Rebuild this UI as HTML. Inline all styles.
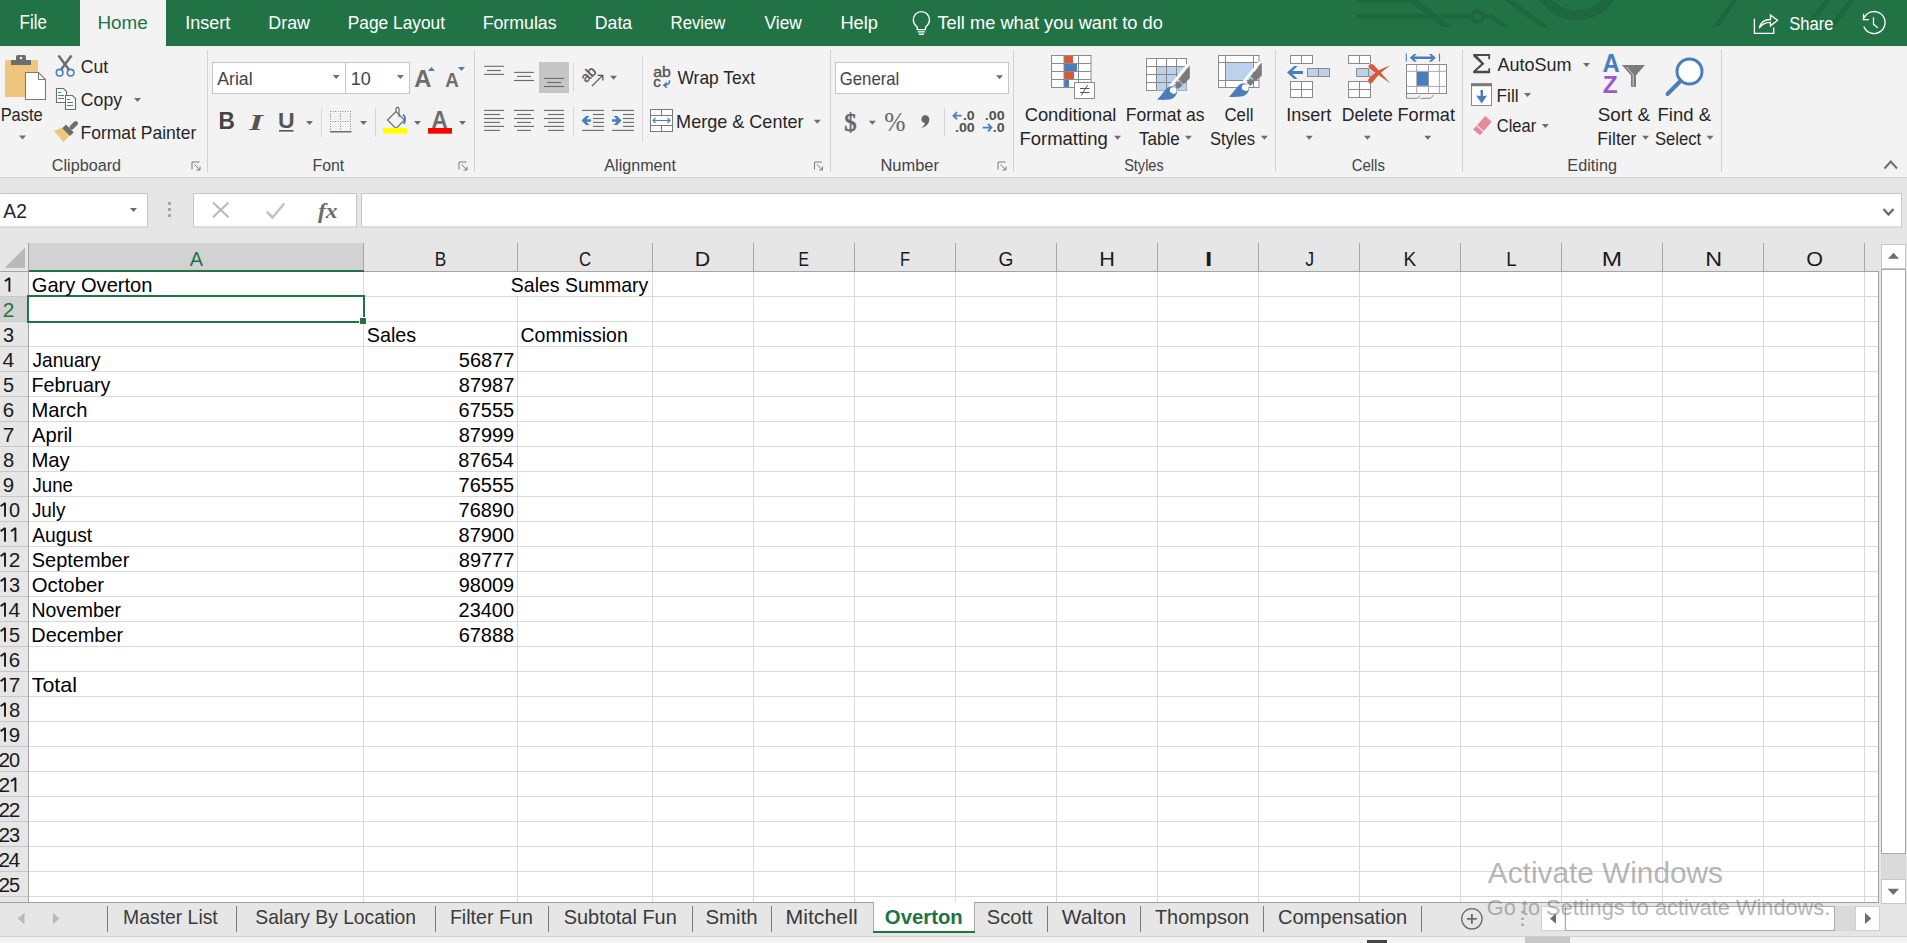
<!DOCTYPE html>
<html><head><meta charset="utf-8"><style>
html,body{margin:0;padding:0;width:1907px;height:943px;overflow:hidden;background:#e6e6e6;}
svg{display:block;font-family:"Liberation Sans",sans-serif;}
</style></head><body>
<svg width="1907" height="943" viewBox="0 0 1907 943" shape-rendering="auto">
<rect x="0" y="0" width="1907" height="46" fill="#217346"/>
<g fill="none" stroke="#1e6840" stroke-width="5"><path d="M1356 0.5H1414L1452 29"/><path d="M1356 16.5H1471"/><path d="M1484 16.5H1492L1508 29"/><path d="M1408 -3L1449 29"/><path d="M1505 -3L1547 29"/><path d="M1830 -3L1808 26"/><path d="M1854 -3L1832 26"/><path d="M1737 -3L1714 29"/></g>
<circle cx="1477.5" cy="16.5" r="5.5" fill="none" stroke="#1e6840" stroke-width="4"/>
<circle cx="1577" cy="-24.3" r="39.7" fill="none" stroke="#1e6840" stroke-width="10"/>
<rect x="1300" y="27" width="460" height="19" fill="#217346"/>
<rect x="1790" y="26" width="117" height="20" fill="#217346"/>
<rect x="80" y="0" width="86" height="47" fill="#f3f3f3"/>
<rect x="0" y="46" width="1907" height="131" fill="#f3f3f3"/>
<rect x="0" y="177" width="1907" height="1" fill="#d5d5d5"/>
<rect x="0" y="178" width="1907" height="65" fill="#e6e6e6"/>
<text x="19.61" y="29.30" font-family="Liberation Sans, sans-serif" font-size="20.35" font-weight="normal" fill="#ffffff" textLength="27.13" lengthAdjust="spacingAndGlyphs">File</text>
<text x="97.44" y="29.10" font-family="Liberation Sans, sans-serif" font-size="18.90" font-weight="normal" fill="#217346" textLength="50.36" lengthAdjust="spacingAndGlyphs">Home</text>
<text x="185.14" y="29.10" font-family="Liberation Sans, sans-serif" font-size="18.90" font-weight="normal" fill="#ffffff" textLength="45.02" lengthAdjust="spacingAndGlyphs">Insert</text>
<text x="268.33" y="29.10" font-family="Liberation Sans, sans-serif" font-size="18.90" font-weight="normal" fill="#ffffff" textLength="41.60" lengthAdjust="spacingAndGlyphs">Draw</text>
<text x="347.77" y="29.20" font-family="Liberation Sans, sans-serif" font-size="18.90" font-weight="normal" fill="#ffffff" textLength="97.27" lengthAdjust="spacingAndGlyphs">Page Layout</text>
<text x="482.64" y="29.30" font-family="Liberation Sans, sans-serif" font-size="18.90" font-weight="normal" fill="#ffffff" textLength="73.99" lengthAdjust="spacingAndGlyphs">Formulas</text>
<text x="594.85" y="29.30" font-family="Liberation Sans, sans-serif" font-size="18.90" font-weight="normal" fill="#ffffff" textLength="37.25" lengthAdjust="spacingAndGlyphs">Data</text>
<text x="670.62" y="29.30" font-family="Liberation Sans, sans-serif" font-size="18.90" font-weight="normal" fill="#ffffff" textLength="54.82" lengthAdjust="spacingAndGlyphs">Review</text>
<text x="764.51" y="29.30" font-family="Liberation Sans, sans-serif" font-size="18.90" font-weight="normal" fill="#ffffff" textLength="37.33" lengthAdjust="spacingAndGlyphs">View</text>
<text x="840.39" y="29.40" font-family="Liberation Sans, sans-serif" font-size="18.90" font-weight="normal" fill="#ffffff" textLength="37.68" lengthAdjust="spacingAndGlyphs">Help</text>
<text x="937.49" y="29.40" font-family="Liberation Sans, sans-serif" font-size="18.90" font-weight="normal" fill="#ffffff" textLength="225.45" lengthAdjust="spacingAndGlyphs">Tell me what you want to do</text>
<text x="1789.15" y="29.80" font-family="Liberation Sans, sans-serif" font-size="19.19" font-weight="normal" fill="#ffffff" textLength="44.37" lengthAdjust="spacingAndGlyphs">Share</text>
<g fill="none" stroke="#ffffff" stroke-width="1.4"><path d="M917.3 27.2C914.6 24.8 913.3 22.2 913.3 19.7A8.1 8.1 0 0 1 929.5 19.7C929.5 22.2 928.2 24.8 925.5 27.2V29.6H917.3Z"/><path d="M917.8 31.9H925M918.8 34.3H924"/></g>
<g fill="none" stroke="#ffffff" stroke-width="1.3"><path d="M1754.4 18.8V33.4H1773.7V27.5"/><path d="M1759.2 28.2C1760.5 22.5 1764.5 19.5 1770.5 19.5V15L1777.6 20.3L1770.5 25.8V22.3C1765 22.3 1761.5 24.5 1759.2 28.2Z"/></g>
<g fill="none" stroke="#ffffff" stroke-width="1.3"><path d="M1863.9 18.3A11 11 0 1 1 1863.8 26.5"/><path d="M1863.5 13.8V19.6H1869"/><path d="M1873.5 17.2V24.2L1878 28"/></g>
<rect x="207" y="50" width="1" height="122" fill="#d2d2d2"/>
<rect x="474" y="50" width="1" height="122" fill="#d2d2d2"/>
<rect x="830" y="50" width="1" height="122" fill="#d2d2d2"/>
<rect x="1013" y="50" width="1" height="122" fill="#d2d2d2"/>
<rect x="1275" y="50" width="1" height="122" fill="#d2d2d2"/>
<rect x="1462" y="50" width="1" height="122" fill="#d2d2d2"/>
<rect x="1721" y="50" width="1" height="122" fill="#d2d2d2"/>
<text x="51.79" y="170.70" font-family="Liberation Sans, sans-serif" font-size="16.13" font-weight="normal" fill="#444444" textLength="69.23" lengthAdjust="spacingAndGlyphs">Clipboard</text>
<g fill="none" stroke="#7a7a7a" stroke-width="1"><path d="M192.0 169.5V162.0H199.5"/><path d="M194.5 164.5L200.0 170.0M200.0 166.5V170.0H196.5"/></g>
<text x="312.60" y="170.70" font-family="Liberation Sans, sans-serif" font-size="15.70" font-weight="normal" fill="#444444" textLength="31.64" lengthAdjust="spacingAndGlyphs">Font</text>
<g fill="none" stroke="#7a7a7a" stroke-width="1"><path d="M459.0 169.5V162.0H466.5"/><path d="M461.5 164.5L467.0 170.0M467.0 166.5V170.0H463.5"/></g>
<text x="604.36" y="170.60" font-family="Liberation Sans, sans-serif" font-size="15.70" font-weight="normal" fill="#444444" textLength="71.55" lengthAdjust="spacingAndGlyphs">Alignment</text>
<g fill="none" stroke="#7a7a7a" stroke-width="1"><path d="M814.5 169.5V162.0H822"/><path d="M817 164.5L822.5 170.0M822.5 166.5V170.0H819"/></g>
<text x="880.44" y="171.00" font-family="Liberation Sans, sans-serif" font-size="15.70" font-weight="normal" fill="#444444" textLength="58.53" lengthAdjust="spacingAndGlyphs">Number</text>
<g fill="none" stroke="#7a7a7a" stroke-width="1"><path d="M998.0 169.5V162.0H1005.5"/><path d="M1000.5 164.5L1006.0 170.0M1006.0 166.5V170.0H1002.5"/></g>
<text x="1124.15" y="170.80" font-family="Liberation Sans, sans-serif" font-size="15.70" font-weight="normal" fill="#444444" textLength="39.57" lengthAdjust="spacingAndGlyphs">Styles</text>
<text x="1351.65" y="171.00" font-family="Liberation Sans, sans-serif" font-size="15.70" font-weight="normal" fill="#444444" textLength="33.28" lengthAdjust="spacingAndGlyphs">Cells</text>
<text x="1567.36" y="171.00" font-family="Liberation Sans, sans-serif" font-size="15.70" font-weight="normal" fill="#444444" textLength="49.55" lengthAdjust="spacingAndGlyphs">Editing</text>
<path d="M1884.5 168.5L1890.8 161.5L1897 168.5" fill="none" stroke="#6d6d6d" stroke-width="2"/>
<rect x="5" y="60" width="33" height="37" rx="1.5" fill="#eec67e"/>
<rect x="11" y="60" width="20" height="5" fill="#6d6d6d"/>
<rect x="16" y="55" width="10" height="6" rx="1.5" fill="#6d6d6d"/>
<circle cx="21" cy="58" r="1.3" fill="#f3f3f3"/>
<path d="M25.5 72.5H38.5L45.5 79.5V99.5H25.5Z" fill="#ffffff" stroke="#7a7a7a" stroke-width="1.1"/>
<path d="M38.5 72.5V79.5H45.5" fill="none" stroke="#7a7a7a" stroke-width="1.1"/>
<text x="0.64" y="120.60" font-family="Liberation Sans, sans-serif" font-size="17.88" font-weight="normal" fill="#262626" textLength="42.09" lengthAdjust="spacingAndGlyphs">Paste</text>
<path d="M19.0 135.5h7l-3.5 4z" fill="#6d6d6d"/>
<path d="M58.5 55.5L69 69.8M71.5 55.5L61 69.8" fill="none" stroke="#6d6d6d" stroke-width="2.5"/>
<g fill="none" stroke="#4a7ebb" stroke-width="1.6"><circle cx="59.6" cy="72.7" r="3.3"/><circle cx="70.6" cy="72.7" r="3.3"/></g>
<text x="80.82" y="72.60" font-family="Liberation Sans, sans-serif" font-size="18.17" font-weight="normal" fill="#262626" textLength="27.33" lengthAdjust="spacingAndGlyphs">Cut</text>
<g fill="#ffffff" stroke="#6d6d6d" stroke-width="1.1"><path d="M56.5 88.5H63.5L66.5 91.5V102.5H56.5Z"/><path d="M65.5 95.5H72.5L75.5 98.5V109.5H65.5Z"/></g>
<g stroke="#4a7ebb" stroke-width="1"><path d="M58 92.5H61M58 95.5H64M58 98.5H64M67 99.5H70M67 102.5H73M67 105.5H73"/></g>
<text x="80.82" y="105.70" font-family="Liberation Sans, sans-serif" font-size="17.88" font-weight="normal" fill="#262626" textLength="41.22" lengthAdjust="spacingAndGlyphs">Copy</text>
<path d="M134.0 98.0h7l-3.5 4z" fill="#6d6d6d"/>
<path d="M54 131L62.5 127.5L69.5 135.5L63.5 142Z" fill="#eec67e"/>
<rect x="-5.5" y="-2.6" width="11" height="5.2" fill="#6d6d6d" transform="translate(68 130.2) rotate(45)"/>
<rect x="-5" y="-2.2" width="10" height="4.4" rx="2" fill="#6d6d6d" transform="translate(73.8 125.3) rotate(-45)"/>
<text x="80.56" y="139.00" font-family="Liberation Sans, sans-serif" font-size="18.17" font-weight="normal" fill="#262626" textLength="115.72" lengthAdjust="spacingAndGlyphs">Format Painter</text>
<rect x="212.5" y="62.5" width="133" height="31" fill="#ffffff" stroke="#c6c6c6"/>
<rect x="345.5" y="62.5" width="64" height="31" fill="#ffffff" stroke="#c6c6c6"/>
<text x="217.26" y="85.00" font-family="Liberation Sans, sans-serif" font-size="18.90" font-weight="normal" fill="#444444" textLength="35.35" lengthAdjust="spacingAndGlyphs">Arial</text>
<path d="M332.7 75.0h7l-3.5 4z" fill="#6d6d6d"/>
<text x="350.65" y="85.00" font-family="Liberation Sans, sans-serif" font-size="18.90" font-weight="normal" fill="#444444" textLength="20.07" lengthAdjust="spacingAndGlyphs">10</text>
<path d="M396.9 75.0h7l-3.5 4z" fill="#6d6d6d"/>
<text x="414.21" y="87.10" font-family="Liberation Sans, sans-serif" font-size="23.98" font-weight="bold" fill="#6d6d6d" textLength="17.14" lengthAdjust="spacingAndGlyphs">A</text>
<path d="M427.8 71L431.4 67L435 71Z" fill="#4a7ebb"/>
<text x="445.33" y="87.00" font-family="Liberation Sans, sans-serif" font-size="19.62" font-weight="bold" fill="#6d6d6d" textLength="13.58" lengthAdjust="spacingAndGlyphs">A</text>
<path d="M458 67H465L461.5 71Z" fill="#4a7ebb"/>
<text x="218.47" y="129.30" font-family="Liberation Sans, sans-serif" font-size="23.69" font-weight="bold" fill="#444444" textLength="16.34" lengthAdjust="spacingAndGlyphs">B</text>
<text x="249" y="129.5" font-family="Liberation Serif, serif" font-style="italic" font-weight="bold" font-size="23" fill="#555555" textLength="14" lengthAdjust="spacingAndGlyphs">I</text>
<text x="277.92" y="128.00" font-family="Liberation Sans, sans-serif" font-size="21.80" font-weight="bold" fill="#555555" textLength="16.66" lengthAdjust="spacingAndGlyphs">U</text>
<rect x="279" y="130" width="14.5" height="1.6" fill="#555555"/>
<path d="M306.0 121.0h7l-3.5 4z" fill="#6d6d6d"/>
<rect x="321" y="108" width="1" height="29" fill="#d6d6d6"/>
<g fill="none" stroke="#8a8a8a" stroke-width="1" stroke-dasharray="1 1.5"><path d="M330 111.5H351M330 121.5H351M330.5 111V131M340.5 111V131M350.5 111V131"/></g>
<rect x="330" y="131" width="21.5" height="1.5" fill="#6d6d6d"/>
<path d="M360.0 121.0h7l-3.5 4z" fill="#6d6d6d"/>
<rect x="375" y="108" width="1" height="29" fill="#d6d6d6"/>
<g fill="none" stroke="#6d6d6d" stroke-width="1.2"><path d="M387.5 120L396 111.5L404.5 120L396 128.5Z"/><path d="M396 111.5V108.5A1.6 1.6 0 0 1 399 108.5V117"/></g>
<path d="M403 114.5C405.5 116.5 405.5 120.5 404 124" fill="none" stroke="#4a7ebb" stroke-width="1.8"/>
<rect x="383" y="128" width="24" height="5.7" fill="#ffff00"/>
<path d="M414.0 121.0h7l-3.5 4z" fill="#6d6d6d"/>
<text x="431.44" y="128.00" font-family="Liberation Sans, sans-serif" font-size="23.98" font-weight="bold" fill="#6d6d6d" textLength="16.17" lengthAdjust="spacingAndGlyphs">A</text>
<rect x="428" y="128" width="24" height="5.7" fill="#ff0000"/>
<path d="M459.0 121.0h7l-3.5 4z" fill="#6d6d6d"/>
<rect x="484.0" y="65.75" width="20.0" height="1.1" fill="#6a6a6a"/>
<rect x="487.0" y="69.95" width="14.0" height="1.1" fill="#6a6a6a"/>
<rect x="484.0" y="73.85" width="20.0" height="1.1" fill="#6a6a6a"/>
<rect x="514.0" y="71.85" width="20.0" height="1.1" fill="#6a6a6a"/>
<rect x="517.0" y="75.85" width="14.0" height="1.1" fill="#6a6a6a"/>
<rect x="514.0" y="79.95" width="20.0" height="1.1" fill="#6a6a6a"/>
<rect x="539" y="62" width="30" height="31" fill="#c6c6c6"/>
<rect x="544.0" y="77.85" width="20.0" height="1.1" fill="#6a6a6a"/>
<rect x="547.0" y="81.95" width="14.0" height="1.1" fill="#6a6a6a"/>
<rect x="544.0" y="85.95" width="20.0" height="1.1" fill="#6a6a6a"/>
<rect x="573" y="63" width="1" height="29" fill="#d6d6d6"/>
<text x="0" y="0" font-family="Liberation Sans, sans-serif" font-size="14.5" fill="#555555" stroke="#555555" stroke-width="0.35" transform="translate(586.2 83.3) rotate(-45)" textLength="15.5" lengthAdjust="spacingAndGlyphs">ab</text>
<path d="M591.9 86.1L602.6 75.4M597.6 75.3H602.8V80.5" fill="none" stroke="#555555" stroke-width="1.3"/>
<path d="M610.0 75.8h7l-3.5 4z" fill="#6d6d6d"/>
<rect x="642" y="56" width="1" height="86" fill="#d6d6d6"/>
<text x="653.23" y="76.70" font-family="Liberation Sans, sans-serif" font-size="14.68" font-weight="normal" fill="#505050" textLength="17.65" lengthAdjust="spacingAndGlyphs" stroke="#505050" stroke-width="0.3">ab</text>
<text x="653.26" y="86.90" font-family="Liberation Sans, sans-serif" font-size="14.39" font-weight="normal" fill="#505050" textLength="7.56" lengthAdjust="spacingAndGlyphs" stroke="#505050" stroke-width="0.3">c</text>
<path d="M669.6 80.2C669.8 83.6 667.8 85.2 664.4 85.2M666.8 82.6L663.9 85.2L666.8 87.7" fill="none" stroke="#4a7ebb" stroke-width="1.6"/>
<text x="677.51" y="83.70" font-family="Liberation Sans, sans-serif" font-size="17.73" font-weight="normal" fill="#262626" textLength="77.62" lengthAdjust="spacingAndGlyphs">Wrap Text</text>
<rect x="484.0" y="109.85" width="20.0" height="1.1" fill="#6a6a6a"/>
<rect x="514.0" y="109.85" width="20.0" height="1.1" fill="#6a6a6a"/>
<rect x="544.0" y="109.85" width="20.0" height="1.1" fill="#6a6a6a"/>
<rect x="484.0" y="113.95" width="16.0" height="1.1" fill="#6a6a6a"/>
<rect x="517.0" y="113.95" width="14.0" height="1.1" fill="#6a6a6a"/>
<rect x="548.0" y="113.95" width="16.0" height="1.1" fill="#6a6a6a"/>
<rect x="484.0" y="117.95" width="20.0" height="1.1" fill="#6a6a6a"/>
<rect x="514.0" y="117.95" width="20.0" height="1.1" fill="#6a6a6a"/>
<rect x="544.0" y="117.95" width="20.0" height="1.1" fill="#6a6a6a"/>
<rect x="484.0" y="121.85" width="16.0" height="1.1" fill="#6a6a6a"/>
<rect x="517.0" y="121.85" width="14.0" height="1.1" fill="#6a6a6a"/>
<rect x="548.0" y="121.85" width="16.0" height="1.1" fill="#6a6a6a"/>
<rect x="484.0" y="125.85" width="20.0" height="1.1" fill="#6a6a6a"/>
<rect x="514.0" y="125.85" width="20.0" height="1.1" fill="#6a6a6a"/>
<rect x="544.0" y="125.85" width="20.0" height="1.1" fill="#6a6a6a"/>
<rect x="484.0" y="129.85" width="16.0" height="1.1" fill="#6a6a6a"/>
<rect x="517.0" y="129.85" width="14.0" height="1.1" fill="#6a6a6a"/>
<rect x="548.0" y="129.85" width="16.0" height="1.1" fill="#6a6a6a"/>
<rect x="573" y="107" width="1" height="29" fill="#d6d6d6"/>
<rect x="582.0" y="109.85" width="22.0" height="1.1" fill="#6a6a6a"/>
<rect x="612.0" y="109.85" width="22.0" height="1.1" fill="#6a6a6a"/>
<rect x="593.0" y="113.95" width="11.0" height="1.1" fill="#6a6a6a"/>
<rect x="623.0" y="113.95" width="11.0" height="1.1" fill="#6a6a6a"/>
<rect x="593.0" y="117.95" width="11.0" height="1.1" fill="#6a6a6a"/>
<rect x="623.0" y="117.95" width="11.0" height="1.1" fill="#6a6a6a"/>
<rect x="593.0" y="121.85" width="11.0" height="1.1" fill="#6a6a6a"/>
<rect x="623.0" y="121.85" width="11.0" height="1.1" fill="#6a6a6a"/>
<rect x="593.0" y="125.85" width="11.0" height="1.1" fill="#6a6a6a"/>
<rect x="623.0" y="125.85" width="11.0" height="1.1" fill="#6a6a6a"/>
<rect x="582.0" y="129.85" width="22.0" height="1.1" fill="#6a6a6a"/>
<rect x="612.0" y="129.85" width="22.0" height="1.1" fill="#6a6a6a"/>
<path d="M581.5 120.5L586 116H589.5L586.5 119.2H591V121.8H586.5L589.5 125H586Z" fill="#4a7ebb"/>
<path d="M621.6 120.5L617.1 116H613.6L616.6 119.2H612V121.8H616.6L613.6 125H617.1Z" fill="#4a7ebb"/>
<rect x="650.5" y="109.5" width="22" height="22" fill="#ffffff" stroke="#7a7a7a" stroke-width="1"/>
<path d="M650.5 115.5H672.5M650.5 125.5H672.5M661.5 109.5V115.5M661.5 125.5V131.5" stroke="#7a7a7a" stroke-width="1"/>
<path d="M653 120.5H670M655.5 118L653 120.5L655.5 123M667.5 118L670 120.5L667.5 123" fill="none" stroke="#4a7ebb" stroke-width="1.2"/>
<text x="676.11" y="128.10" font-family="Liberation Sans, sans-serif" font-size="18.31" font-weight="normal" fill="#262626" textLength="127.38" lengthAdjust="spacingAndGlyphs">Merge &amp; Center</text>
<path d="M813.8 119.7h7l-3.5 4z" fill="#6d6d6d"/>
<rect x="835.5" y="62.5" width="173" height="31" fill="#ffffff" stroke="#c6c6c6"/>
<text x="839.76" y="84.70" font-family="Liberation Sans, sans-serif" font-size="18.31" font-weight="normal" fill="#444444" textLength="59.57" lengthAdjust="spacingAndGlyphs">General</text>
<path d="M996.0 75.2h7l-3.5 4z" fill="#6d6d6d"/>
<text x="844.28" y="131.00" font-family="Liberation Serif, sans-serif" font-size="25.44" font-weight="normal" fill="#666666" textLength="12.28" lengthAdjust="spacingAndGlyphs" stroke="#666666" stroke-width="0.7">$</text>
<path d="M868.9 120.8h7l-3.5 4z" fill="#6d6d6d"/>
<text x="884.16" y="131.20" font-family="Liberation Serif, sans-serif" font-size="26.45" font-weight="normal" fill="#666666" textLength="21.25" lengthAdjust="spacingAndGlyphs">%</text>
<path d="M924.6 115.3C928.2 115 930 117.6 929.1 121.2C928.3 124.4 925.5 127 921.3 128C923.4 126.2 924.6 124.8 925 123C922.4 122.9 921.2 121 921.4 119C921.6 116.9 922.8 115.5 924.6 115.3Z" fill="#666666"/>
<rect x="944" y="108" width="1" height="28" fill="#d6d6d6"/>
<path d="M957 112L953.5 115.7L957 119.4M953.5 115.7H961.6" fill="none" stroke="#4a7ebb" stroke-width="1.8"/>
<text x="962.95" y="119.60" font-family="Liberation Sans, sans-serif" font-size="12.35" font-weight="bold" fill="#505050" textLength="11.73" lengthAdjust="spacingAndGlyphs">.0</text>
<text x="954.94" y="131.60" font-family="Liberation Sans, sans-serif" font-size="12.35" font-weight="bold" fill="#505050" textLength="19.73" lengthAdjust="spacingAndGlyphs">.00</text>
<text x="984.74" y="119.60" font-family="Liberation Sans, sans-serif" font-size="12.35" font-weight="bold" fill="#505050" textLength="19.84" lengthAdjust="spacingAndGlyphs">.00</text>
<path d="M988 123.8L991.5 127.6L988 131.4M982.6 127.6H991.2" fill="none" stroke="#4a7ebb" stroke-width="1.8"/>
<text x="992.74" y="131.60" font-family="Liberation Sans, sans-serif" font-size="12.35" font-weight="bold" fill="#505050" textLength="11.85" lengthAdjust="spacingAndGlyphs">.0</text>
<rect x="1051.5" y="55.5" width="39.5" height="32" fill="#ffffff" stroke="#8a8a8a" stroke-width="1"/>
<rect x="1064" y="56" width="9" height="7.5" fill="#d9583b"/>
<rect x="1064" y="63.5" width="13" height="8" fill="#4a7ebb"/>
<rect x="1064" y="71.5" width="10" height="8" fill="#d9583b"/>
<rect x="1064" y="79.5" width="5" height="7.5" fill="#4a7ebb"/>
<path d="M1051.5 63.5H1091M1051.5 71.5H1091M1051.5 79.5H1091M1064 55.5V87.5M1078.5 55.5V87.5" stroke="#8a8a8a" stroke-width="1" fill="none"/>
<rect x="1074.5" y="82.5" width="20" height="16" fill="#ffffff" stroke="#8a8a8a" stroke-width="1"/>
<path d="M1080 88.5H1089.5M1080 92.5H1089.5M1087.6 85L1081.3 95.5" stroke="#555555" stroke-width="1" fill="none"/>
<text x="1024.68" y="120.60" font-family="Liberation Sans, sans-serif" font-size="18.02" font-weight="normal" fill="#262626" textLength="91.73" lengthAdjust="spacingAndGlyphs">Conditional</text>
<text x="1019.48" y="144.80" font-family="Liberation Sans, sans-serif" font-size="18.02" font-weight="normal" fill="#262626" textLength="88.32" lengthAdjust="spacingAndGlyphs">Formatting</text>
<path d="M1114.1 135.8h7l-3.5 4z" fill="#6d6d6d"/>
<rect x="1146.5" y="58.5" width="40" height="32" fill="#ffffff" stroke="#8a8a8a" stroke-width="1"/>
<rect x="1156.5" y="66.5" width="30" height="24" fill="#bcd1ea"/>
<path d="M1146.5 66.5H1186.5M1146.5 74.5H1186.5M1146.5 82.5H1186.5M1156.5 58.5V90.5M1166.5 58.5V90.5M1176.5 58.5V90.5" stroke="#8a8a8a" stroke-width="1" fill="none"/>
<g transform="translate(0 0)"><path d="M1165.7 92.1L1187.7 64.9" stroke="#ffffff" stroke-width="2.6"/><path d="M1189.8 65.5V78.3L1183.6 84.2L1178.6 79.4Z" fill="#7a7a7a"/><path d="M1174.6 85.4L1178.6 81.2L1182.7 85L1178.4 89Z" fill="#7a7a7a"/><path d="M1157 99.8C1160 96.5 1163.5 92 1166.5 88.5C1169.5 85.2 1174 85.5 1176 88.5C1178 91.5 1177 96 1172.5 98.5C1169.5 100 1165 100 1157 99.8Z" fill="#4a7ebb"/><circle cx="1173.2" cy="90.6" r="3.4" fill="#ffffff"/><path d="M1166 95C1167.5 92 1170.5 91.5 1172.5 93.5C1173.5 94.6 1173.2 96.5 1172.8 97.5L1164 99Z" fill="#4a7ebb"/></g>
<text x="1125.75" y="120.60" font-family="Liberation Sans, sans-serif" font-size="18.02" font-weight="normal" fill="#262626" textLength="78.88" lengthAdjust="spacingAndGlyphs">Format as</text>
<text x="1138.92" y="144.80" font-family="Liberation Sans, sans-serif" font-size="18.02" font-weight="normal" fill="#262626" textLength="40.82" lengthAdjust="spacingAndGlyphs">Table</text>
<path d="M1184.9 135.8h7l-3.5 4z" fill="#6d6d6d"/>
<rect x="1218.5" y="55.5" width="40.5" height="32" fill="#ffffff" stroke="#8a8a8a" stroke-width="1"/>
<rect x="1226" y="63" width="27" height="17" fill="#bcd1ea"/>
<path d="M1218.5 62.5H1259M1218.5 80.5H1259M1225.5 55.5V87.5M1253.5 55.5V87.5" stroke="#8a8a8a" stroke-width="1" fill="none"/>
<g transform="translate(72 -2.9)"><path d="M1165.7 92.1L1187.7 64.9" stroke="#ffffff" stroke-width="2.6"/><path d="M1189.8 65.5V78.3L1183.6 84.2L1178.6 79.4Z" fill="#7a7a7a"/><path d="M1174.6 85.4L1178.6 81.2L1182.7 85L1178.4 89Z" fill="#7a7a7a"/><path d="M1157 99.8C1160 96.5 1163.5 92 1166.5 88.5C1169.5 85.2 1174 85.5 1176 88.5C1178 91.5 1177 96 1172.5 98.5C1169.5 100 1165 100 1157 99.8Z" fill="#4a7ebb"/><circle cx="1173.2" cy="90.6" r="3.4" fill="#ffffff"/><path d="M1166 95C1167.5 92 1170.5 91.5 1172.5 93.5C1173.5 94.6 1173.2 96.5 1172.8 97.5L1164 99Z" fill="#4a7ebb"/></g>
<text x="1224.46" y="120.60" font-family="Liberation Sans, sans-serif" font-size="18.02" font-weight="normal" fill="#262626" textLength="28.98" lengthAdjust="spacingAndGlyphs">Cell</text>
<text x="1209.96" y="144.80" font-family="Liberation Sans, sans-serif" font-size="18.02" font-weight="normal" fill="#262626" textLength="45.03" lengthAdjust="spacingAndGlyphs">Styles</text>
<path d="M1260.9 135.8h7l-3.5 4z" fill="#6d6d6d"/>
<g fill="#ffffff" stroke="#8a8a8a" stroke-width="1"><rect x="1290.5" y="55.5" width="22" height="8"/><rect x="1290.5" y="81.5" width="22" height="16"/></g>
<path d="M1301.5 55.5V63.5M1290.5 89.5H1312.5M1301.5 81.5V97.5" stroke="#8a8a8a" stroke-width="1"/>
<rect x="1307.5" y="68.5" width="22" height="8" fill="#bcd1ea" stroke="#8a8a8a" stroke-width="1"/>
<path d="M1318.5 68.5V76.5" stroke="#8a8a8a" stroke-width="1"/>
<path d="M1287 72.5L1294.3 66H1297.6L1292.3 71H1303V74H1292.3L1297.6 79H1294.3Z" fill="#4a7ebb"/>
<text x="1286.13" y="120.60" font-family="Liberation Sans, sans-serif" font-size="18.02" font-weight="normal" fill="#262626" textLength="45.12" lengthAdjust="spacingAndGlyphs">Insert</text>
<path d="M1305.8 135.8h7l-3.5 4z" fill="#6d6d6d"/>
<g fill="#ffffff" stroke="#8a8a8a" stroke-width="1"><rect x="1348.5" y="55.5" width="22" height="8"/><rect x="1348.5" y="81.5" width="22" height="16"/></g>
<path d="M1359.5 55.5V63.5M1348.5 89.5H1370.5M1359.5 81.5V97.5" stroke="#8a8a8a" stroke-width="1"/>
<path d="M1356.5 68.5H1372.5L1376 72.5L1372.5 76.5H1356.5Z" fill="#bcd1ea" stroke="#8a8a8a" stroke-width="1"/>
<path d="M1368.5 68.5V76.5" stroke="#8a8a8a" stroke-width="1"/>
<path d="M1369 65.5L1371.5 63.5L1376 66L1391 84L1372 70.5L1369.5 68.5Z" fill="#f3f3f3" stroke="#f3f3f3" stroke-width="1.5"/>
<path d="M1368.6 66.3C1369 63.8 1371.8 63.4 1373.8 65L1390.5 83.5L1371.4 70C1369.4 68.8 1368.4 67.6 1368.6 66.3Z" fill="#d9583b"/>
<path d="M1369.2 83.2C1367.6 81.5 1367.8 79.3 1369.8 77.6C1375.8 71.8 1382.8 67.6 1390.4 65.6C1384 69.6 1378.2 74.8 1373.2 81.6C1372.1 83.1 1370.3 84.2 1369.2 83.2Z" fill="#d9583b"/>
<text x="1341.74" y="120.60" font-family="Liberation Sans, sans-serif" font-size="18.02" font-weight="normal" fill="#262626" textLength="51.02" lengthAdjust="spacingAndGlyphs">Delete</text>
<path d="M1363.9 135.8h7l-3.5 4z" fill="#6d6d6d"/>
<path d="M1406.3 53.5V61.5M1439.5 53.5V61.5" stroke="#4a7ebb" stroke-width="1.1"/>
<path d="M1409.8 57.8L1414.2 53.9H1416.8L1414.2 56.5H1431.5L1428.9 53.9H1431.5L1435.9 57.8L1431.5 61.7H1428.9L1431.5 59.1H1414.2L1416.8 61.7H1414.2Z" fill="#4a7ebb"/>
<rect x="1406.5" y="64.5" width="40" height="29" fill="#ffffff" stroke="#8a8a8a" stroke-width="1"/>
<path d="M1406.5 71.3H1446.5M1406.5 86.4H1446.5M1416.7 64.5V93.5M1428.5 64.5V93.5M1439.4 64.5V93.5" stroke="#a6a6a6" stroke-width="1" fill="none"/>
<rect x="1417" y="71.8" width="11.2" height="14" fill="#4a7ebb"/>
<path d="M1406.5 93.5V98.3H1417.5L1420 95.5M1420.6 98.3H1430.5L1433.7 95" fill="none" stroke="#8a8a8a" stroke-width="1"/>
<text x="1397.50" y="120.60" font-family="Liberation Sans, sans-serif" font-size="18.02" font-weight="normal" fill="#262626" textLength="57.42" lengthAdjust="spacingAndGlyphs">Format</text>
<path d="M1424.3 135.8h7l-3.5 4z" fill="#6d6d6d"/>
<path d="M1473.2 53.9H1490.1V59.2H1488.3V56H1477.2L1484.4 63.8L1476.6 70.8H1488.3V68.3H1490.1V73.2H1473.2V71L1481.2 63.8L1473.2 56.2Z" fill="#4a4a4a"/>
<text x="1497.56" y="71.30" font-family="Liberation Sans, sans-serif" font-size="18.31" font-weight="normal" fill="#262626" textLength="74.03" lengthAdjust="spacingAndGlyphs">AutoSum</text>
<path d="M1583.0 63.0h7l-3.5 4z" fill="#6d6d6d"/>
<rect x="1471.5" y="84.5" width="20" height="21" fill="#ffffff" stroke="#8a8a8a" stroke-width="1"/>
<rect x="1471" y="83.2" width="21" height="3" fill="#7a7a7a"/>
<path d="M1480.5 90H1483V96L1487 95.4L1481.7 103.6L1476.1 95.4L1480.5 96Z" fill="#4a7ebb"/>
<text x="1496.57" y="101.70" font-family="Liberation Sans, sans-serif" font-size="18.60" font-weight="normal" fill="#262626" textLength="22.09" lengthAdjust="spacingAndGlyphs">Fill</text>
<path d="M1524.0 93.0h7l-3.5 4z" fill="#6d6d6d"/>
<path d="M1485.3 116L1491.8 121.7L1480 135.2L1473 129.4Z" fill="#e8899b"/>
<path d="M1476.5 125.4L1483.4 131.2" stroke="#f3f3f3" stroke-width="1.2"/>
<text x="1496.77" y="132.40" font-family="Liberation Sans, sans-serif" font-size="17.88" font-weight="normal" fill="#262626" textLength="39.47" lengthAdjust="spacingAndGlyphs">Clear</text>
<path d="M1541.9 124.0h7l-3.5 4z" fill="#6d6d6d"/>
<text x="1602.40" y="72.30" font-family="Liberation Sans, sans-serif" font-size="25.44" font-weight="bold" fill="#4a7ebb" textLength="17.25" lengthAdjust="spacingAndGlyphs">A</text>
<text x="1602.77" y="92.90" font-family="Liberation Sans, sans-serif" font-size="24.71" font-weight="bold" fill="#9b59c6" textLength="14.93" lengthAdjust="spacingAndGlyphs">Z</text>
<path d="M1621.9 65H1645L1636 75.2V86.7H1631V75.2Z" fill="#7a7a7a"/>
<path d="M1626.5 66.8L1633.2 74.8V86" fill="none" stroke="#d0d0d0" stroke-width="1"/>
<text x="1597.65" y="120.60" font-family="Liberation Sans, sans-serif" font-size="18.02" font-weight="normal" fill="#262626" textLength="52.31" lengthAdjust="spacingAndGlyphs">Sort &amp;</text>
<text x="1597.35" y="144.80" font-family="Liberation Sans, sans-serif" font-size="18.02" font-weight="normal" fill="#262626" textLength="39.11" lengthAdjust="spacingAndGlyphs">Filter</text>
<path d="M1642.0 135.8h7l-3.5 4z" fill="#6d6d6d"/>
<circle cx="1689.5" cy="71.5" r="12.5" fill="#ffffff" stroke="#4a7ebb" stroke-width="3"/>
<path d="M1680.5 81L1667.5 94" stroke="#4a7ebb" stroke-width="4" stroke-linecap="round"/>
<text x="1657.47" y="120.60" font-family="Liberation Sans, sans-serif" font-size="18.02" font-weight="normal" fill="#262626" textLength="53.61" lengthAdjust="spacingAndGlyphs">Find &amp;</text>
<text x="1654.95" y="144.80" font-family="Liberation Sans, sans-serif" font-size="18.02" font-weight="normal" fill="#262626" textLength="46.16" lengthAdjust="spacingAndGlyphs">Select</text>
<path d="M1706.5 135.8h7l-3.5 4z" fill="#6d6d6d"/>
<rect x="-2" y="193.5" width="149.5" height="33.5" fill="#ffffff" stroke="#c6c6c6" stroke-width="1"/>
<text x="3.35" y="217.90" font-family="Liberation Sans, sans-serif" font-size="20.35" font-weight="normal" fill="#262626" textLength="23.52" lengthAdjust="spacingAndGlyphs">A2</text>
<path d="M130.0 208.0h7l-3.5 4z" fill="#6d6d6d"/>
<rect x="168" y="202" width="3" height="3" fill="#a6a6a6"/>
<rect x="168" y="208" width="3" height="3" fill="#a6a6a6"/>
<rect x="168" y="214" width="3" height="3" fill="#a6a6a6"/>
<rect x="193.5" y="193.5" width="163" height="33.5" fill="#ffffff" stroke="#c6c6c6" stroke-width="1"/>
<path d="M213 202.5L228.5 217.3M228.5 202.5L213 217.3" stroke="#b8b8b8" stroke-width="2" fill="none"/>
<path d="M266.8 211.5L272.5 217.5L284.3 203.5" stroke="#c4c4c4" stroke-width="2.6" fill="none"/>
<text x="318" y="217.5" font-family="Liberation Serif, serif" font-style="italic" font-weight="bold" font-size="21" fill="#6a6a6a" textLength="19.5" lengthAdjust="spacingAndGlyphs">fx</text>
<rect x="361.5" y="193.5" width="1540" height="33.5" fill="#ffffff" stroke="#c6c6c6" stroke-width="1"/>
<path d="M1883.5 209L1888.5 214.5L1893.5 209" stroke="#6d6d6d" stroke-width="2.4" fill="none"/>
<rect x="29" y="272" width="1849" height="630" fill="#ffffff"/>
<rect x="0" y="243" width="1878" height="28" fill="#e6e6e6"/>
<rect x="29" y="243" width="334" height="28" fill="#d2d2d2"/>
<rect x="0" y="272" width="28" height="630" fill="#e6e6e6"/>
<rect x="0" y="297" width="28" height="24" fill="#d2d2d2"/>
<path d="M4.5 268H25V247.5Z" fill="#b9b9b9"/>
<rect x="29" y="296" width="1849" height="1" fill="#d9d9d9"/>
<rect x="0" y="296" width="28" height="1" fill="#c8c8c8"/>
<rect x="29" y="321" width="1849" height="1" fill="#d9d9d9"/>
<rect x="0" y="321" width="28" height="1" fill="#c8c8c8"/>
<rect x="29" y="346" width="1849" height="1" fill="#d9d9d9"/>
<rect x="0" y="346" width="28" height="1" fill="#c8c8c8"/>
<rect x="29" y="371" width="1849" height="1" fill="#d9d9d9"/>
<rect x="0" y="371" width="28" height="1" fill="#c8c8c8"/>
<rect x="29" y="396" width="1849" height="1" fill="#d9d9d9"/>
<rect x="0" y="396" width="28" height="1" fill="#c8c8c8"/>
<rect x="29" y="421" width="1849" height="1" fill="#d9d9d9"/>
<rect x="0" y="421" width="28" height="1" fill="#c8c8c8"/>
<rect x="29" y="446" width="1849" height="1" fill="#d9d9d9"/>
<rect x="0" y="446" width="28" height="1" fill="#c8c8c8"/>
<rect x="29" y="471" width="1849" height="1" fill="#d9d9d9"/>
<rect x="0" y="471" width="28" height="1" fill="#c8c8c8"/>
<rect x="29" y="496" width="1849" height="1" fill="#d9d9d9"/>
<rect x="0" y="496" width="28" height="1" fill="#c8c8c8"/>
<rect x="29" y="521" width="1849" height="1" fill="#d9d9d9"/>
<rect x="0" y="521" width="28" height="1" fill="#c8c8c8"/>
<rect x="29" y="546" width="1849" height="1" fill="#d9d9d9"/>
<rect x="0" y="546" width="28" height="1" fill="#c8c8c8"/>
<rect x="29" y="571" width="1849" height="1" fill="#d9d9d9"/>
<rect x="0" y="571" width="28" height="1" fill="#c8c8c8"/>
<rect x="29" y="596" width="1849" height="1" fill="#d9d9d9"/>
<rect x="0" y="596" width="28" height="1" fill="#c8c8c8"/>
<rect x="29" y="621" width="1849" height="1" fill="#d9d9d9"/>
<rect x="0" y="621" width="28" height="1" fill="#c8c8c8"/>
<rect x="29" y="646" width="1849" height="1" fill="#d9d9d9"/>
<rect x="0" y="646" width="28" height="1" fill="#c8c8c8"/>
<rect x="29" y="671" width="1849" height="1" fill="#d9d9d9"/>
<rect x="0" y="671" width="28" height="1" fill="#c8c8c8"/>
<rect x="29" y="696" width="1849" height="1" fill="#d9d9d9"/>
<rect x="0" y="696" width="28" height="1" fill="#c8c8c8"/>
<rect x="29" y="721" width="1849" height="1" fill="#d9d9d9"/>
<rect x="0" y="721" width="28" height="1" fill="#c8c8c8"/>
<rect x="29" y="746" width="1849" height="1" fill="#d9d9d9"/>
<rect x="0" y="746" width="28" height="1" fill="#c8c8c8"/>
<rect x="29" y="771" width="1849" height="1" fill="#d9d9d9"/>
<rect x="0" y="771" width="28" height="1" fill="#c8c8c8"/>
<rect x="29" y="796" width="1849" height="1" fill="#d9d9d9"/>
<rect x="0" y="796" width="28" height="1" fill="#c8c8c8"/>
<rect x="29" y="821" width="1849" height="1" fill="#d9d9d9"/>
<rect x="0" y="821" width="28" height="1" fill="#c8c8c8"/>
<rect x="29" y="846" width="1849" height="1" fill="#d9d9d9"/>
<rect x="0" y="846" width="28" height="1" fill="#c8c8c8"/>
<rect x="29" y="871" width="1849" height="1" fill="#d9d9d9"/>
<rect x="0" y="871" width="28" height="1" fill="#c8c8c8"/>
<rect x="29" y="896" width="1849" height="1" fill="#d9d9d9"/>
<rect x="0" y="896" width="28" height="1" fill="#c8c8c8"/>
<rect x="363" y="272" width="1" height="630" fill="#d9d9d9"/>
<rect x="363" y="243" width="1" height="28" fill="#a8a8a8"/>
<rect x="517" y="296" width="1" height="606" fill="#d9d9d9"/>
<rect x="517" y="243" width="1" height="28" fill="#a8a8a8"/>
<rect x="652" y="272" width="1" height="630" fill="#d9d9d9"/>
<rect x="652" y="243" width="1" height="28" fill="#a8a8a8"/>
<rect x="753" y="272" width="1" height="630" fill="#d9d9d9"/>
<rect x="753" y="243" width="1" height="28" fill="#a8a8a8"/>
<rect x="854" y="272" width="1" height="630" fill="#d9d9d9"/>
<rect x="854" y="243" width="1" height="28" fill="#a8a8a8"/>
<rect x="955" y="272" width="1" height="630" fill="#d9d9d9"/>
<rect x="955" y="243" width="1" height="28" fill="#a8a8a8"/>
<rect x="1056" y="272" width="1" height="630" fill="#d9d9d9"/>
<rect x="1056" y="243" width="1" height="28" fill="#a8a8a8"/>
<rect x="1157" y="272" width="1" height="630" fill="#d9d9d9"/>
<rect x="1157" y="243" width="1" height="28" fill="#a8a8a8"/>
<rect x="1258" y="272" width="1" height="630" fill="#d9d9d9"/>
<rect x="1258" y="243" width="1" height="28" fill="#a8a8a8"/>
<rect x="1359" y="272" width="1" height="630" fill="#d9d9d9"/>
<rect x="1359" y="243" width="1" height="28" fill="#a8a8a8"/>
<rect x="1460" y="272" width="1" height="630" fill="#d9d9d9"/>
<rect x="1460" y="243" width="1" height="28" fill="#a8a8a8"/>
<rect x="1561" y="272" width="1" height="630" fill="#d9d9d9"/>
<rect x="1561" y="243" width="1" height="28" fill="#a8a8a8"/>
<rect x="1662" y="272" width="1" height="630" fill="#d9d9d9"/>
<rect x="1662" y="243" width="1" height="28" fill="#a8a8a8"/>
<rect x="1763" y="272" width="1" height="630" fill="#d9d9d9"/>
<rect x="1763" y="243" width="1" height="28" fill="#a8a8a8"/>
<rect x="1864" y="272" width="1" height="630" fill="#d9d9d9"/>
<rect x="1864" y="243" width="1" height="28" fill="#a8a8a8"/>
<rect x="0" y="271" width="1878" height="1" fill="#a4a4a4"/>
<rect x="28" y="243" width="1" height="659" fill="#a4a4a4"/>
<rect x="1878" y="271" width="1" height="632" fill="#9e9e9e"/>
<rect x="0" y="902" width="1879" height="1" fill="#9e9e9e"/>
<rect x="29" y="270" width="335" height="2" fill="#217346"/>
<rect x="27" y="295" width="338" height="2" fill="#217346"/>
<rect x="27" y="321" width="332" height="2" fill="#217346"/>
<rect x="27" y="295" width="2" height="28" fill="#217346"/>
<rect x="363" y="295" width="2" height="22" fill="#217346"/>
<rect x="359" y="317" width="8" height="8" fill="#ffffff"/>
<rect x="360" y="318" width="6" height="6" fill="#217346"/>
<text x="189.85" y="266.00" font-family="Liberation Sans, sans-serif" font-size="20.64" font-weight="normal" fill="#217346" textLength="13.29" lengthAdjust="spacingAndGlyphs">A</text>
<text x="434.87" y="266.00" font-family="Liberation Sans, sans-serif" font-size="20.64" font-weight="normal" fill="#1a1a1a" textLength="11.52" lengthAdjust="spacingAndGlyphs">B</text>
<text x="578.96" y="266.00" font-family="Liberation Sans, sans-serif" font-size="20.64" font-weight="normal" fill="#1a1a1a" textLength="12.17" lengthAdjust="spacingAndGlyphs">C</text>
<text x="694.73" y="266.00" font-family="Liberation Sans, sans-serif" font-size="20.64" font-weight="normal" fill="#1a1a1a" textLength="15.48" lengthAdjust="spacingAndGlyphs">D</text>
<text x="798.61" y="266.00" font-family="Liberation Sans, sans-serif" font-size="20.64" font-weight="normal" fill="#1a1a1a" textLength="10.45" lengthAdjust="spacingAndGlyphs">E</text>
<text x="900.03" y="266.00" font-family="Liberation Sans, sans-serif" font-size="20.64" font-weight="normal" fill="#1a1a1a" textLength="10.15" lengthAdjust="spacingAndGlyphs">F</text>
<text x="998.54" y="266.00" font-family="Liberation Sans, sans-serif" font-size="20.64" font-weight="normal" fill="#1a1a1a" textLength="14.90" lengthAdjust="spacingAndGlyphs">G</text>
<text x="1099.21" y="266.00" font-family="Liberation Sans, sans-serif" font-size="20.64" font-weight="normal" fill="#1a1a1a" textLength="15.67" lengthAdjust="spacingAndGlyphs">H</text>
<text x="1203.30" y="266.00" font-family="Liberation Sans, sans-serif" font-size="20.64" font-weight="normal" fill="#1a1a1a" textLength="10.81" lengthAdjust="spacingAndGlyphs">I</text>
<text x="1305.23" y="266.00" font-family="Liberation Sans, sans-serif" font-size="20.64" font-weight="normal" fill="#1a1a1a" textLength="8.90" lengthAdjust="spacingAndGlyphs">J</text>
<text x="1403.53" y="266.00" font-family="Liberation Sans, sans-serif" font-size="20.64" font-weight="normal" fill="#1a1a1a" textLength="12.70" lengthAdjust="spacingAndGlyphs">K</text>
<text x="1506.36" y="266.00" font-family="Liberation Sans, sans-serif" font-size="20.64" font-weight="normal" fill="#1a1a1a" textLength="10.37" lengthAdjust="spacingAndGlyphs">L</text>
<text x="1601.79" y="266.00" font-family="Liberation Sans, sans-serif" font-size="20.64" font-weight="normal" fill="#1a1a1a" textLength="20.34" lengthAdjust="spacingAndGlyphs">M</text>
<text x="1705.28" y="266.00" font-family="Liberation Sans, sans-serif" font-size="20.64" font-weight="normal" fill="#1a1a1a" textLength="16.84" lengthAdjust="spacingAndGlyphs">N</text>
<text x="1806.18" y="266.00" font-family="Liberation Sans, sans-serif" font-size="20.64" font-weight="normal" fill="#1a1a1a" textLength="16.75" lengthAdjust="spacingAndGlyphs">O</text>
<clipPath id="rh"><rect x="0" y="272" width="28" height="630"/></clipPath><g clip-path="url(#rh)">
<path d="M5.00 281.20L9.40 278.00V291.80" fill="none" stroke="#1a1a1a" stroke-width="1.9" stroke-linejoin="bevel"/>
<text x="2.76" y="316.80" font-family="Liberation Sans, sans-serif" font-size="20.35" font-weight="normal" fill="#217346" textLength="11.61" lengthAdjust="spacingAndGlyphs">2</text>
<text x="3.05" y="341.80" font-family="Liberation Sans, sans-serif" font-size="20.35" font-weight="normal" fill="#1a1a1a" textLength="11.12" lengthAdjust="spacingAndGlyphs">3</text>
<text x="2.52" y="366.80" font-family="Liberation Sans, sans-serif" font-size="20.35" font-weight="normal" fill="#1a1a1a" textLength="11.78" lengthAdjust="spacingAndGlyphs">4</text>
<text x="3.00" y="391.80" font-family="Liberation Sans, sans-serif" font-size="20.35" font-weight="normal" fill="#1a1a1a" textLength="11.12" lengthAdjust="spacingAndGlyphs">5</text>
<text x="2.77" y="416.80" font-family="Liberation Sans, sans-serif" font-size="20.35" font-weight="normal" fill="#1a1a1a" textLength="11.42" lengthAdjust="spacingAndGlyphs">6</text>
<text x="2.76" y="441.80" font-family="Liberation Sans, sans-serif" font-size="20.35" font-weight="normal" fill="#1a1a1a" textLength="11.61" lengthAdjust="spacingAndGlyphs">7</text>
<text x="2.94" y="466.80" font-family="Liberation Sans, sans-serif" font-size="20.35" font-weight="normal" fill="#1a1a1a" textLength="11.24" lengthAdjust="spacingAndGlyphs">8</text>
<text x="2.82" y="491.80" font-family="Liberation Sans, sans-serif" font-size="20.35" font-weight="normal" fill="#1a1a1a" textLength="11.42" lengthAdjust="spacingAndGlyphs">9</text>
<path d="M0.60 506.20L5.00 503.00V516.80" fill="none" stroke="#1a1a1a" stroke-width="1.9" stroke-linejoin="bevel"/>
<text x="9.00" y="516.80" font-family="Liberation Sans, sans-serif" font-size="20.35" font-weight="normal" fill="#1a1a1a" textLength="11.07" lengthAdjust="spacingAndGlyphs">0</text>
<path d="M0.60 531.20L5.00 528.00V541.80" fill="none" stroke="#1a1a1a" stroke-width="1.9" stroke-linejoin="bevel"/>
<path d="M11.00 531.20L15.40 528.00V541.80" fill="none" stroke="#1a1a1a" stroke-width="1.9" stroke-linejoin="bevel"/>
<path d="M0.60 556.20L5.00 553.00V566.80" fill="none" stroke="#1a1a1a" stroke-width="1.9" stroke-linejoin="bevel"/>
<text x="8.76" y="566.80" font-family="Liberation Sans, sans-serif" font-size="20.35" font-weight="normal" fill="#1a1a1a" textLength="11.61" lengthAdjust="spacingAndGlyphs">2</text>
<path d="M0.60 581.20L5.00 578.00V591.80" fill="none" stroke="#1a1a1a" stroke-width="1.9" stroke-linejoin="bevel"/>
<text x="9.05" y="591.80" font-family="Liberation Sans, sans-serif" font-size="20.35" font-weight="normal" fill="#1a1a1a" textLength="11.12" lengthAdjust="spacingAndGlyphs">3</text>
<path d="M0.60 606.20L5.00 603.00V616.80" fill="none" stroke="#1a1a1a" stroke-width="1.9" stroke-linejoin="bevel"/>
<text x="8.52" y="616.80" font-family="Liberation Sans, sans-serif" font-size="20.35" font-weight="normal" fill="#1a1a1a" textLength="11.78" lengthAdjust="spacingAndGlyphs">4</text>
<path d="M0.60 631.20L5.00 628.00V641.80" fill="none" stroke="#1a1a1a" stroke-width="1.9" stroke-linejoin="bevel"/>
<text x="9.00" y="641.80" font-family="Liberation Sans, sans-serif" font-size="20.35" font-weight="normal" fill="#1a1a1a" textLength="11.12" lengthAdjust="spacingAndGlyphs">5</text>
<path d="M0.60 656.20L5.00 653.00V666.80" fill="none" stroke="#1a1a1a" stroke-width="1.9" stroke-linejoin="bevel"/>
<text x="8.77" y="666.80" font-family="Liberation Sans, sans-serif" font-size="20.35" font-weight="normal" fill="#1a1a1a" textLength="11.42" lengthAdjust="spacingAndGlyphs">6</text>
<path d="M0.60 681.20L5.00 678.00V691.80" fill="none" stroke="#1a1a1a" stroke-width="1.9" stroke-linejoin="bevel"/>
<text x="8.76" y="691.80" font-family="Liberation Sans, sans-serif" font-size="20.35" font-weight="normal" fill="#1a1a1a" textLength="11.61" lengthAdjust="spacingAndGlyphs">7</text>
<path d="M0.60 706.20L5.00 703.00V716.80" fill="none" stroke="#1a1a1a" stroke-width="1.9" stroke-linejoin="bevel"/>
<text x="8.94" y="716.80" font-family="Liberation Sans, sans-serif" font-size="20.35" font-weight="normal" fill="#1a1a1a" textLength="11.24" lengthAdjust="spacingAndGlyphs">8</text>
<path d="M0.60 731.20L5.00 728.00V741.80" fill="none" stroke="#1a1a1a" stroke-width="1.9" stroke-linejoin="bevel"/>
<text x="8.82" y="741.80" font-family="Liberation Sans, sans-serif" font-size="20.35" font-weight="normal" fill="#1a1a1a" textLength="11.42" lengthAdjust="spacingAndGlyphs">9</text>
<text x="-1.64" y="766.80" font-family="Liberation Sans, sans-serif" font-size="20.35" font-weight="normal" fill="#1a1a1a" textLength="11.61" lengthAdjust="spacingAndGlyphs">2</text>
<text x="9.00" y="766.80" font-family="Liberation Sans, sans-serif" font-size="20.35" font-weight="normal" fill="#1a1a1a" textLength="11.07" lengthAdjust="spacingAndGlyphs">0</text>
<text x="-1.64" y="791.80" font-family="Liberation Sans, sans-serif" font-size="20.35" font-weight="normal" fill="#1a1a1a" textLength="11.61" lengthAdjust="spacingAndGlyphs">2</text>
<path d="M11.00 781.20L15.40 778.00V791.80" fill="none" stroke="#1a1a1a" stroke-width="1.9" stroke-linejoin="bevel"/>
<text x="-1.64" y="816.80" font-family="Liberation Sans, sans-serif" font-size="20.35" font-weight="normal" fill="#1a1a1a" textLength="11.61" lengthAdjust="spacingAndGlyphs">2</text>
<text x="8.76" y="816.80" font-family="Liberation Sans, sans-serif" font-size="20.35" font-weight="normal" fill="#1a1a1a" textLength="11.61" lengthAdjust="spacingAndGlyphs">2</text>
<text x="-1.64" y="841.80" font-family="Liberation Sans, sans-serif" font-size="20.35" font-weight="normal" fill="#1a1a1a" textLength="11.61" lengthAdjust="spacingAndGlyphs">2</text>
<text x="9.05" y="841.80" font-family="Liberation Sans, sans-serif" font-size="20.35" font-weight="normal" fill="#1a1a1a" textLength="11.12" lengthAdjust="spacingAndGlyphs">3</text>
<text x="-1.64" y="866.80" font-family="Liberation Sans, sans-serif" font-size="20.35" font-weight="normal" fill="#1a1a1a" textLength="11.61" lengthAdjust="spacingAndGlyphs">2</text>
<text x="8.52" y="866.80" font-family="Liberation Sans, sans-serif" font-size="20.35" font-weight="normal" fill="#1a1a1a" textLength="11.78" lengthAdjust="spacingAndGlyphs">4</text>
<text x="-1.64" y="891.80" font-family="Liberation Sans, sans-serif" font-size="20.35" font-weight="normal" fill="#1a1a1a" textLength="11.61" lengthAdjust="spacingAndGlyphs">2</text>
<text x="9.00" y="891.80" font-family="Liberation Sans, sans-serif" font-size="20.35" font-weight="normal" fill="#1a1a1a" textLength="11.12" lengthAdjust="spacingAndGlyphs">5</text>
</g>
<text x="31.79" y="291.70" font-family="Liberation Sans, sans-serif" font-size="20.49" font-weight="normal" fill="#000000" textLength="120.70" lengthAdjust="spacingAndGlyphs">Gary Overton</text>
<text x="510.82" y="291.70" font-family="Liberation Sans, sans-serif" font-size="20.49" font-weight="normal" fill="#000000" textLength="137.53" lengthAdjust="spacingAndGlyphs">Sales Summary</text>
<text x="366.71" y="341.70" font-family="Liberation Sans, sans-serif" font-size="20.49" font-weight="normal" fill="#000000" textLength="49.46" lengthAdjust="spacingAndGlyphs">Sales</text>
<text x="520.53" y="341.70" font-family="Liberation Sans, sans-serif" font-size="20.49" font-weight="normal" fill="#000000" textLength="107.21" lengthAdjust="spacingAndGlyphs">Commission</text>
<text x="32.51" y="366.70" font-family="Liberation Sans, sans-serif" font-size="20.49" font-weight="normal" fill="#000000" textLength="67.94" lengthAdjust="spacingAndGlyphs">January</text>
<text x="458.80" y="366.70" font-family="Liberation Sans, sans-serif" font-size="20.49" font-weight="normal" fill="#000000" textLength="55.51" lengthAdjust="spacingAndGlyphs">56877</text>
<text x="31.47" y="391.70" font-family="Liberation Sans, sans-serif" font-size="20.49" font-weight="normal" fill="#000000" textLength="78.96" lengthAdjust="spacingAndGlyphs">February</text>
<text x="458.80" y="391.70" font-family="Liberation Sans, sans-serif" font-size="20.49" font-weight="normal" fill="#000000" textLength="55.51" lengthAdjust="spacingAndGlyphs">87987</text>
<text x="31.44" y="416.70" font-family="Liberation Sans, sans-serif" font-size="20.49" font-weight="normal" fill="#000000" textLength="55.94" lengthAdjust="spacingAndGlyphs">March</text>
<text x="458.60" y="416.70" font-family="Liberation Sans, sans-serif" font-size="20.49" font-weight="normal" fill="#000000" textLength="55.51" lengthAdjust="spacingAndGlyphs">67555</text>
<text x="31.95" y="441.70" font-family="Liberation Sans, sans-serif" font-size="20.49" font-weight="normal" fill="#000000" textLength="40.43" lengthAdjust="spacingAndGlyphs">April</text>
<text x="458.70" y="441.70" font-family="Liberation Sans, sans-serif" font-size="20.49" font-weight="normal" fill="#000000" textLength="55.51" lengthAdjust="spacingAndGlyphs">87999</text>
<text x="31.43" y="466.70" font-family="Liberation Sans, sans-serif" font-size="20.49" font-weight="normal" fill="#000000" textLength="38.31" lengthAdjust="spacingAndGlyphs">May</text>
<text x="458.35" y="466.70" font-family="Liberation Sans, sans-serif" font-size="20.49" font-weight="normal" fill="#000000" textLength="55.51" lengthAdjust="spacingAndGlyphs">87654</text>
<text x="32.52" y="491.70" font-family="Liberation Sans, sans-serif" font-size="20.49" font-weight="normal" fill="#000000" textLength="40.49" lengthAdjust="spacingAndGlyphs">June</text>
<text x="458.60" y="491.70" font-family="Liberation Sans, sans-serif" font-size="20.49" font-weight="normal" fill="#000000" textLength="55.51" lengthAdjust="spacingAndGlyphs">76555</text>
<text x="31.92" y="516.70" font-family="Liberation Sans, sans-serif" font-size="20.49" font-weight="normal" fill="#000000" textLength="33.45" lengthAdjust="spacingAndGlyphs">July</text>
<text x="458.55" y="516.70" font-family="Liberation Sans, sans-serif" font-size="20.49" font-weight="normal" fill="#000000" textLength="55.51" lengthAdjust="spacingAndGlyphs">76890</text>
<text x="32.15" y="541.70" font-family="Liberation Sans, sans-serif" font-size="20.49" font-weight="normal" fill="#000000" textLength="60.01" lengthAdjust="spacingAndGlyphs">August</text>
<text x="458.55" y="541.70" font-family="Liberation Sans, sans-serif" font-size="20.49" font-weight="normal" fill="#000000" textLength="55.51" lengthAdjust="spacingAndGlyphs">87900</text>
<text x="31.80" y="566.70" font-family="Liberation Sans, sans-serif" font-size="20.49" font-weight="normal" fill="#000000" textLength="97.53" lengthAdjust="spacingAndGlyphs">September</text>
<text x="458.80" y="566.70" font-family="Liberation Sans, sans-serif" font-size="20.49" font-weight="normal" fill="#000000" textLength="55.51" lengthAdjust="spacingAndGlyphs">89777</text>
<text x="31.63" y="591.70" font-family="Liberation Sans, sans-serif" font-size="20.49" font-weight="normal" fill="#000000" textLength="72.47" lengthAdjust="spacingAndGlyphs">October</text>
<text x="458.70" y="591.70" font-family="Liberation Sans, sans-serif" font-size="20.49" font-weight="normal" fill="#000000" textLength="55.51" lengthAdjust="spacingAndGlyphs">98009</text>
<text x="31.40" y="616.70" font-family="Liberation Sans, sans-serif" font-size="20.49" font-weight="normal" fill="#000000" textLength="89.70" lengthAdjust="spacingAndGlyphs">November</text>
<text x="458.55" y="616.70" font-family="Liberation Sans, sans-serif" font-size="20.49" font-weight="normal" fill="#000000" textLength="55.51" lengthAdjust="spacingAndGlyphs">23400</text>
<text x="31.36" y="641.70" font-family="Liberation Sans, sans-serif" font-size="20.49" font-weight="normal" fill="#000000" textLength="91.75" lengthAdjust="spacingAndGlyphs">December</text>
<text x="458.65" y="641.70" font-family="Liberation Sans, sans-serif" font-size="20.49" font-weight="normal" fill="#000000" textLength="55.51" lengthAdjust="spacingAndGlyphs">67888</text>
<text x="31.72" y="691.70" font-family="Liberation Sans, sans-serif" font-size="20.49" font-weight="normal" fill="#000000" textLength="45.23" lengthAdjust="spacingAndGlyphs">Total</text>
<rect x="0" y="903" width="1907" height="33" fill="#e6e6e6"/>
<rect x="0" y="936" width="1907" height="1" fill="#d0d0d0"/>
<rect x="0" y="937" width="1907" height="6" fill="#f3f3f3"/>
<rect x="1525" y="937" width="45" height="6" fill="#c8c8c8"/>
<rect x="1367" y="940" width="20" height="3" fill="#444444"/>
<path d="M24.5 912.7V924.3L17.7 918.5Z" fill="#b9b9b9"/>
<path d="M52.9 912.7V924.3L59.5 918.5Z" fill="#b9b9b9"/>
<rect x="107" y="906" width="1" height="26" fill="#7a7a7a"/>
<rect x="236" y="906" width="1" height="26" fill="#7a7a7a"/>
<rect x="435" y="906" width="1" height="26" fill="#7a7a7a"/>
<rect x="548" y="906" width="1" height="26" fill="#7a7a7a"/>
<rect x="692" y="906" width="1" height="26" fill="#7a7a7a"/>
<rect x="771" y="906" width="1" height="26" fill="#7a7a7a"/>
<rect x="1047" y="906" width="1" height="26" fill="#7a7a7a"/>
<rect x="1140" y="906" width="1" height="26" fill="#7a7a7a"/>
<rect x="1263" y="906" width="1" height="26" fill="#7a7a7a"/>
<rect x="1421" y="906" width="1" height="26" fill="#7a7a7a"/>
<rect x="873" y="902" width="102" height="31" fill="#ffffff"/>
<rect x="873" y="902" width="1" height="29" fill="#ababab"/>
<rect x="974" y="902" width="1" height="29" fill="#ababab"/>
<rect x="873" y="931" width="102" height="2" fill="#217346"/>
<text x="123.10" y="923.70" font-family="Liberation Sans, sans-serif" font-size="20.20" font-weight="normal" fill="#3a3a3a" textLength="94.65" lengthAdjust="spacingAndGlyphs">Master List</text>
<text x="255.33" y="923.70" font-family="Liberation Sans, sans-serif" font-size="20.20" font-weight="normal" fill="#3a3a3a" textLength="160.68" lengthAdjust="spacingAndGlyphs">Salary By Location</text>
<text x="449.88" y="923.70" font-family="Liberation Sans, sans-serif" font-size="20.20" font-weight="normal" fill="#3a3a3a" textLength="82.96" lengthAdjust="spacingAndGlyphs">Filter Fun</text>
<text x="563.70" y="923.70" font-family="Liberation Sans, sans-serif" font-size="20.20" font-weight="normal" fill="#3a3a3a" textLength="113.06" lengthAdjust="spacingAndGlyphs">Subtotal Fun</text>
<text x="705.48" y="923.70" font-family="Liberation Sans, sans-serif" font-size="20.20" font-weight="normal" fill="#3a3a3a" textLength="52.22" lengthAdjust="spacingAndGlyphs">Smith</text>
<text x="785.44" y="923.70" font-family="Liberation Sans, sans-serif" font-size="20.20" font-weight="normal" fill="#3a3a3a" textLength="72.19" lengthAdjust="spacingAndGlyphs">Mitchell</text>
<text x="986.79" y="923.70" font-family="Liberation Sans, sans-serif" font-size="20.20" font-weight="normal" fill="#3a3a3a" textLength="45.88" lengthAdjust="spacingAndGlyphs">Scott</text>
<text x="1061.69" y="923.70" font-family="Liberation Sans, sans-serif" font-size="20.20" font-weight="normal" fill="#3a3a3a" textLength="64.63" lengthAdjust="spacingAndGlyphs">Walton</text>
<text x="1154.95" y="923.70" font-family="Liberation Sans, sans-serif" font-size="20.20" font-weight="normal" fill="#3a3a3a" textLength="94.24" lengthAdjust="spacingAndGlyphs">Thompson</text>
<text x="1278.00" y="923.70" font-family="Liberation Sans, sans-serif" font-size="20.20" font-weight="normal" fill="#3a3a3a" textLength="129.17" lengthAdjust="spacingAndGlyphs">Compensation</text>
<text x="884.89" y="923.50" font-family="Liberation Sans, sans-serif" font-size="19.77" font-weight="bold" fill="#217346" textLength="77.86" lengthAdjust="spacingAndGlyphs">Overton</text>
<circle cx="1471.9" cy="918.8" r="10.2" fill="none" stroke="#6a6a6a" stroke-width="1.3"/>
<path d="M1467 918.8H1476.8M1471.9 913.9V923.7" stroke="#6a6a6a" stroke-width="1.8"/>
<rect x="1521" y="911" width="3" height="2.5" fill="#b0b0b0"/>
<rect x="1521" y="917.5" width="3" height="2.5" fill="#b0b0b0"/>
<rect x="1521" y="923.5" width="3" height="2.5" fill="#b0b0b0"/>
<rect x="1541.5" y="906.5" width="23.5" height="24" fill="#ffffff" stroke="#d0d0d0" stroke-width="1"/>
<path d="M1556 913.5V923.7L1550 918.6Z" fill="#6d6d6d"/>
<rect x="1565.5" y="906.5" width="269" height="24" fill="#ffffff" stroke="#ababab" stroke-width="1"/>
<rect x="1835" y="906" width="20" height="25" fill="#dadada"/>
<rect x="1855.5" y="906.5" width="24" height="24" fill="#ffffff" stroke="#d0d0d0" stroke-width="1"/>
<path d="M1865 912.8V924L1871.3 918.4Z" fill="#6d6d6d"/>
<rect x="1879" y="243" width="28" height="660" fill="#e6e6e6"/>
<rect x="1878" y="271" width="1" height="632" fill="#a0a0a0"/>
<rect x="1881.5" y="244.5" width="24" height="24" fill="#ffffff" stroke="#c8c8c8" stroke-width="1"/>
<path d="M1888 258.8H1899L1893.5 252.8Z" fill="#6d6d6d"/>
<rect x="1881.5" y="269.5" width="24" height="584" fill="#ffffff" stroke="#a8a8a8" stroke-width="1"/>
<rect x="1881" y="854" width="25" height="25" fill="#dadada"/>
<rect x="1881.5" y="879.5" width="24" height="24" fill="#ffffff" stroke="#c8c8c8" stroke-width="1"/>
<path d="M1887.6 888.8H1899L1893.3 895Z" fill="#6d6d6d"/>
<text x="1487.83" y="883.00" font-family="Liberation Sans, sans-serif" font-size="29.51" font-weight="normal" fill="#707070" textLength="235.20" lengthAdjust="spacingAndGlyphs" opacity="0.5">Activate Windows</text>
<text x="1486.81" y="914.60" font-family="Liberation Sans, sans-serif" font-size="21.80" font-weight="normal" fill="#707070" textLength="343.46" lengthAdjust="spacingAndGlyphs" opacity="0.5">Go to Settings to activate Windows.</text>
</svg></body></html>
